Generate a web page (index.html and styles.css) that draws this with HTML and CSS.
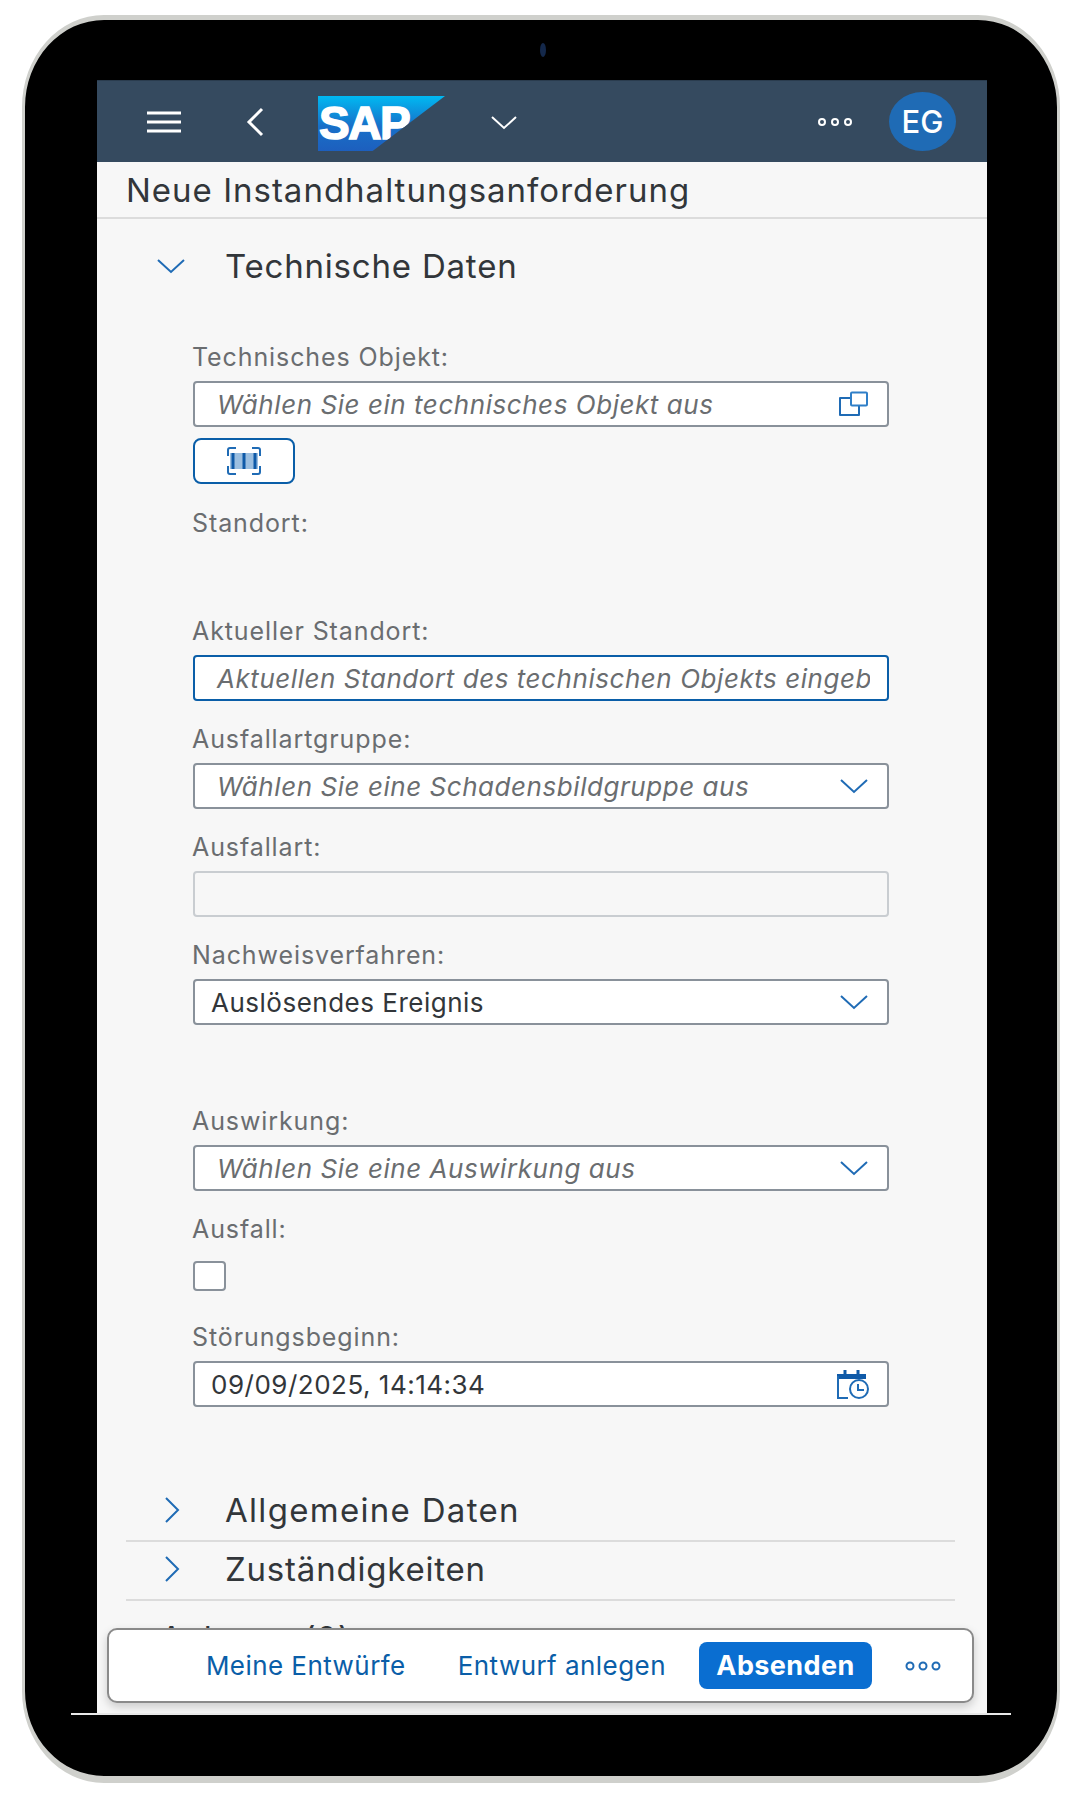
FILE: index.html
```html
<!DOCTYPE html>
<html lang="de">
<head>
<meta charset="utf-8">
<title>Neue Instandhaltungsanforderung</title>
<link rel="stylesheet" href="styles.css">
</head>
<body>
<div class="device">
  <div class="bezel-top"><span class="camera"></span></div>
  <div class="screen">
    <header class="bar">
      <button class="bar-btn menu" aria-label="Menü">
        <svg width="34" height="22" viewBox="0 0 34 22"><path d="M0 2h34M0 11h34M0 20h34" fill="none" stroke="#fff" stroke-width="3"/></svg>
      </button>
      <button class="bar-btn back" aria-label="Zurück">
        <svg width="20" height="30" viewBox="0 0 20 30"><path d="M17 2 4 15l13 13" fill="none" stroke="#fff" stroke-width="3"/></svg>
      </button>
      <div class="logo"><span class="logo-text">SAP</span></div>
      <button class="bar-btn app-menu" aria-label="Mehr">
        <svg width="26" height="14" viewBox="0 0 26 14"><path d="M1 1l12 11L25 1" fill="none" stroke="#fff" stroke-width="2"/></svg>
      </button>
      <button class="bar-btn bar-more" aria-label="Optionen">
        <svg width="36" height="10" viewBox="0 0 36 10"><g fill="none" stroke="#fff" stroke-width="2"><circle cx="5" cy="5" r="3"/><circle cx="18" cy="5" r="3"/><circle cx="31" cy="5" r="3"/></g></svg>
      </button>
      <div class="avatar">EG</div>
    </header>
    <div class="title">Neue Instandhaltungsanforderung</div>
    <main class="content">
      <div class="section-head section-open">
        <span class="twist"><svg width="28" height="16" viewBox="0 0 28 16"><path d="M1 2l13 12L27 2" fill="none" stroke="#1f6bb5" stroke-width="2"/></svg></span>
        <h2 class="section-title">Technische Daten</h2>
      </div>
      <div class="fields">
        <div class="field field-tight">
          <label class="label">Technisches Objekt:</label>
          <div class="input"><span class="placeholder">Wählen Sie ein technisches Objekt aus</span>
            <svg class="icon" width="30" height="26" viewBox="0 0 30 26"><g fill="none" stroke="#1f6bb5" stroke-width="2"><path d="M12 7H2v17h19V15" stroke-linejoin="round"/><rect x="13" y="1.500" width="16" height="13" rx="1" stroke="#2f7fc8" /></g></svg>
          </div>
        </div>
        <button class="scan" aria-label="Scannen">
          <svg width="36" height="28" viewBox="0 0 36 28"><path d="M2 9V3a2 2 0 0 1 2-2h6M26 1h6a2 2 0 0 1 2 2v6M34 19v6a2 2 0 0 1-2 2h-6M10 27H4a2 2 0 0 1-2-2v-6" fill="none" stroke="#1f6bb5" stroke-width="2"/><rect x="4" y="6" width="28" height="16" fill="#9cbfe0"/><path d="M7 6v16M18 6v16M29 6v16" stroke="#0f5aa8" stroke-width="3"/></svg>
        </button>
        <div class="field field-static">
          <label class="label">Standort:</label>
          <div class="static-value"></div>
        </div>
        <div class="field">
          <label class="label">Aktueller Standort:</label>
          <div class="input input-active"><span class="placeholder">Aktuellen Standort des technischen Objekts eingeben</span></div>
        </div>
        <div class="field">
          <label class="label">Ausfallartgruppe:</label>
          <div class="input"><span class="placeholder">Wählen Sie eine Schadensbildgruppe aus</span>
            <svg class="icon" width="28" height="16" viewBox="0 0 28 16"><path d="M1 2l13 12L27 2" fill="none" stroke="#1f6bb5" stroke-width="2"/></svg>
          </div>
        </div>
        <div class="field">
          <label class="label">Ausfallart:</label>
          <div class="input input-disabled"></div>
        </div>
        <div class="field field-gap">
          <label class="label">Nachweisverfahren:</label>
          <div class="input"><span class="value">Auslösendes Ereignis</span>
            <svg class="icon" width="28" height="16" viewBox="0 0 28 16"><path d="M1 2l13 12L27 2" fill="none" stroke="#1f6bb5" stroke-width="2"/></svg>
          </div>
        </div>
        <div class="field">
          <label class="label">Auswirkung:</label>
          <div class="input"><span class="placeholder">Wählen Sie eine Auswirkung aus</span>
            <svg class="icon" width="28" height="16" viewBox="0 0 28 16"><path d="M1 2l13 12L27 2" fill="none" stroke="#1f6bb5" stroke-width="2"/></svg>
          </div>
        </div>
        <div class="field">
          <label class="label">Ausfall:</label>
          <div class="check-wrap"><span class="check"></span></div>
        </div>
        <div class="field">
          <label class="label">Störungsbeginn:</label>
          <div class="input"><span class="value">09/09/2025, 14:14:34</span>
            <svg class="icon icon-cal" width="34" height="30" viewBox="0 0 34 30"><path d="M1 5h29v5H1z" fill="#0f5aa8"/><path d="M9 1v4M22 1v4" stroke="#0f5aa8" stroke-width="3"/><path d="M2 7v22h10" fill="none" stroke="#1f6bb5" stroke-width="2"/><circle cx="23" cy="20" r="9" fill="#fff" stroke="#1f6bb5" stroke-width="2"/><path d="M22 15v6h6" fill="none" stroke="#1f6bb5" stroke-width="2"/></svg>
          </div>
        </div>
      </div>
      <div class="section-head section-row">
        <span class="twist"><svg width="16" height="26" viewBox="0 0 16 26"><path d="M2 1l12 12L2 25" fill="none" stroke="#1f6bb5" stroke-width="2"/></svg></span>
        <h2 class="section-title section-title-wide">Allgemeine Daten</h2>
      </div>
      <div class="section-head section-row">
        <span class="twist"><svg width="16" height="26" viewBox="0 0 16 26"><path d="M2 1l12 12L2 25" fill="none" stroke="#1f6bb5" stroke-width="2"/></svg></span>
        <h2 class="section-title">Zuständigkeiten</h2>
      </div>
      <div class="section-clipped">Anlagen (0)</div>
    </main>
    <footer class="toolbar">
      <a class="link link-first">Meine Entwürfe</a>
      <a class="link">Entwurf anlegen</a>
      <button class="primary">Absenden</button>
      <button class="toolbar-more" aria-label="Mehr">
        <svg width="36" height="12" viewBox="0 0 36 12"><g fill="none" stroke="#1f6bb5" stroke-width="2"><circle cx="5" cy="6" r="3.500"/><circle cx="18" cy="6" r="3.500"/><circle cx="31" cy="6" r="3.500"/></g></svg>
      </button>
    </footer>
  </div>
  <div class="baseline"></div>
</div>
</body>
</html>
```
FILE: styles.css
```css
* { box-sizing: border-box; }
html, body { margin: 0; padding: 0; background: #fff; }
body {
  width: 1080px;
  height: 1798px;
  overflow: hidden;
  font-family: Inter, "Open Sans", sans-serif;
  color: #32363a;
}
button { font: inherit; padding: 0; border: 0; background: none; }

.device {
  width: 1038px;
  height: 1768px;
  margin: 15px 0 0 22px;
  background: #000;
  border: solid #cfd0cc;
  border-width: 5px 3px 7px 3px;
  border-radius: 82px / 92px;
  padding: 0 68px 0 72px;
  display: flex;
  flex-direction: column;
}
.bezel-top {
  flex: 0 0 60px;
  display: flex;
  align-items: center;
  justify-content: center;
}
.camera {
  width: 6px;
  height: 14px;
  border-radius: 50%;
  background: #14284a;
}
.screen {
  position: relative;
  flex: 0 0 1633px;
  width: 890px;
  overflow: hidden;
  background: #f7f7f7;
  display: flex;
  flex-direction: column;
}
.baseline {
  flex: 0 0 2px;
  margin: 0 -22px 0 -26px;
  background: #e8e8e8;
}

/* shell bar */
.bar {
  flex: 0 0 82px;
  background: #354a5f;
  border-top: 1px solid #2a3c4e;
  display: flex;
  align-items: center;
  padding: 0 31px 0 50px;
}
.bar-btn { display: flex; align-items: center; }
.back { margin-left: 64px; }
.menu { margin-top: 1px; }
.logo {
  width: 127px;
  height: 55px;
  margin: 4px 0 0 53px;
  padding: 8px 0 0 1px;
  background: linear-gradient(180deg, #00b9f2 0%, #1870c9 55%, #1d5fbe 100%);
  clip-path: polygon(0 0, 100% 0, 43% 100%, 0 100%);
  overflow: hidden;
}
.logo-text {
  display: block;
  font-family: "Liberation Sans", sans-serif;
  font-weight: 700;
  font-size: 46px;
  line-height: 38px;
  letter-spacing: -1.500px;
  color: #fff;
  -webkit-text-stroke: 1.500px #fff;
}
.app-menu { margin: 2px 0 0 46px; }
.bar-more { margin-left: auto; }
.avatar {
  width: 67px;
  height: 59px;
  margin-left: 36px;
  border-radius: 50%;
  background: #1f6bb5;
  color: #fff;
  font-size: 31px;
  font-weight: 500;
  display: flex;
  align-items: center;
  justify-content: center;
}

/* title */
.title {
  flex: 0 0 57px;
  padding: 1px 0 0 29px;
  border-bottom: 2px solid #dcdcdc;
  font-size: 33px;
  letter-spacing: 1px;
  line-height: 54px;
  white-space: nowrap;
  color: #32363a;
}

/* content */
.content {
  flex: 1 1 auto;
  padding: 0 32px 0 29px;
}
.section-head {
  display: flex;
  align-items: center;
}
.section-open { height: 93px; margin-bottom: 27px; }
.section-row {
  height: 59px;
  padding-bottom: 3px;
  border-bottom: 2px solid #dcdcdc;
}
.twist {
  flex: 0 0 99px;
  display: flex;
  justify-content: flex-start;
  padding-left: 31px;
}
.section-row .twist { padding-left: 38px; }
.section-title {
  margin: 0;
  font-size: 33px;
  letter-spacing: .8px;
  font-weight: 400;
  color: #32363a;
}
.section-title-wide { letter-spacing: 1.300px; }
.section-clipped {
  padding: 17px 0 0 34px;
  font-size: 33px;
  letter-spacing: .8px;
  color: #32363a;
}

/* form */
.fields {
  margin: 0 66px 76px 67px;
  width: 696px;
}
.field { margin-bottom: 20px; }
.field-tight { margin-bottom: 11px; }
.field-static { margin-top: 21px; }
.field-gap { margin-bottom: 78px; }
.field:last-child { margin-bottom: 0; }
.label {
  display: block;
  height: 34px;
  margin: 0 0 8px -1px;
  font-size: 25px;
  letter-spacing: .9px;
  line-height: 36px;
  color: #6a6d70;
}
.input {
  height: 46px;
  background: #fff;
  border: 2px solid #89919a;
  border-radius: 4px;
  padding: 0 19px 0 16px;
  display: flex;
  align-items: center;
  font-size: 26px;
}
.input-active { border-color: #0a5ea8; padding-right: 17px; }
.input-disabled { background: #f7f7f7; border-color: #c9cdd1; }
.placeholder {
  flex: 1 1 auto;
  padding-left: 6px;
  min-width: 0;
  overflow: hidden;
  white-space: nowrap;
  font-style: italic;
  letter-spacing: .55px;
  color: #6a6d70;
}
.value { flex: 1 1 auto; letter-spacing: .5px; color: #32363a; }
.icon { flex: 0 0 auto; margin-left: 8px; }
.icon-cal { margin-right: -2px; }
.static-value { height: 46px; }
.scan {
  display: flex;
  align-items: center;
  justify-content: center;
  width: 102px;
  height: 46px;
  background: #fff;
  border: 2px solid #0a5ea8;
  border-radius: 8px;
}
.check-wrap {
  height: 46px;
  display: flex;
  align-items: center;
}
.check {
  width: 33px;
  height: 30px;
  background: #fff;
  border: 2px solid #89919a;
  border-radius: 4px;
}

/* footer toolbar */
.toolbar {
  position: absolute;
  left: 10px;
  right: 13px;
  top: 1548px;
  height: 75px;
  background: #fff;
  border: 2px solid #8a8a8a;
  border-radius: 10px;
  box-shadow: 0 4px 10px rgba(0, 0, 0, .18);
  display: flex;
  align-items: center;
  justify-content: flex-end;
  padding-right: 31px;
}
.link {
  font-size: 26px;
  letter-spacing: .45px;
  color: #0a5ea8;
  margin-right: 33px;
}
.link-first { margin-right: 52px; }
.primary {
  width: 173px;
  height: 47px;
  background: #0a6ed1;
  color: #fff;
  font-size: 27px;
  letter-spacing: .4px;
  font-weight: 700;
  border-radius: 8px;
}
.toolbar-more {
  display: flex;
  margin-left: 33px;
}
```
